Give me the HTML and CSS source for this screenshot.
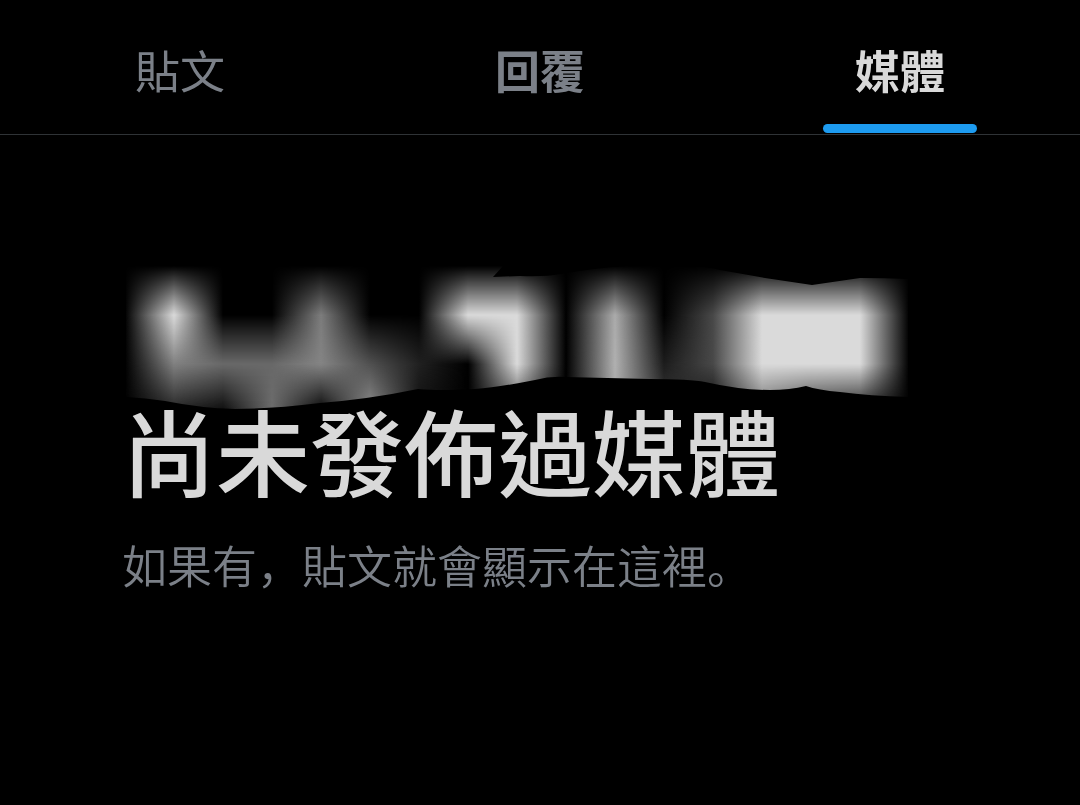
FILE: index.html
```html
<!DOCTYPE html>
<html lang="zh-Hant">
<head>
<meta charset="utf-8">
<meta name="viewport" content="width=device-width, initial-scale=1">
<title>媒體</title>
<link rel="stylesheet" href="styles.css">
</head>
<body>
<nav class="tabs">
  <a class="tab" href="#posts">貼文</a>
  <a class="tab tab-strong" href="#replies">回覆</a>
  <a class="tab tab-strong tab-active" href="#media" aria-current="page">媒體</a>
</nav>
<main class="empty">
  <svg class="redacted" viewBox="122 266 788 143" aria-hidden="true">
    <defs>
      <clipPath id="outline">
        <path d="M126 266H503L493 277L520 276Q545 277 560 274Q595 268 625 266H690Q705 266 720 270L765 278L812 285L860 278Q885 278 908 279V397Q870 396 840 392Q818 390 806 386Q790 390 770 390Q740 390 705 382Q690 379 650 379L565 377Q550 376 535 380Q500 387 475 389Q440 391 418 389Q370 399 320 403Q270 409 235 409Q200 408 165 401Q145 398 126 397Z"/>
      </clipPath>
      <linearGradient id="fade" x1="0" y1="0" x2="0" y2="1">
        <stop offset="0" stop-color="#fff" stop-opacity="0"/>
        <stop offset=".5" stop-color="#fff"/>
        <stop offset="1" stop-color="#fff" stop-opacity="0"/>
      </linearGradient>
      <mask id="m1" maskUnits="userSpaceOnUse" x="125" y="266" width="784" height="98" style="mask-type:alpha"><rect x="125" y="266" width="784" height="98" fill="url(#fade)"/></mask>
      <mask id="m2" maskUnits="userSpaceOnUse" x="125" y="315" width="784" height="98" style="mask-type:alpha"><rect x="125" y="315" width="784" height="98" fill="url(#fade)"/></mask>
      <mask id="m3" maskUnits="userSpaceOnUse" x="125" y="364" width="784" height="98" style="mask-type:alpha"><rect x="125" y="364" width="784" height="98" fill="url(#fade)"/></mask>
      <linearGradient id="r1">
        <stop offset="0" stop-color="#000"/><stop offset=".0625" stop-color="#dadada"/><stop offset=".125" stop-color="#000"/><stop offset=".1875" stop-color="#000"/>
        <stop offset=".25" stop-color="#7c7c7c"/><stop offset=".3125" stop-color="#000"/><stop offset=".375" stop-color="#000"/><stop offset=".4375" stop-color="#dadada"/>
        <stop offset=".5" stop-color="#dadada"/><stop offset=".5625" stop-color="#000"/><stop offset=".625" stop-color="#ababab"/><stop offset=".6875" stop-color="#000"/>
        <stop offset=".75" stop-color="#484848"/><stop offset=".8125" stop-color="#dadada"/><stop offset=".9375" stop-color="#dadada"/><stop offset="1" stop-color="#000"/>
      </linearGradient>
      <linearGradient id="r2">
        <stop offset="0" stop-color="#000"/><stop offset=".0625" stop-color="#808080"/><stop offset=".125" stop-color="#686868"/><stop offset=".1875" stop-color="#686868"/>
        <stop offset=".25" stop-color="#848484"/><stop offset=".3125" stop-color="#505050"/><stop offset=".375" stop-color="#202020"/><stop offset=".4375" stop-color="#000"/>
        <stop offset=".5" stop-color="#dadada"/><stop offset=".5625" stop-color="#000"/><stop offset=".625" stop-color="#b0b0b0"/><stop offset=".6875" stop-color="#1c1c1c"/>
        <stop offset=".75" stop-color="#484848"/><stop offset=".8125" stop-color="#dadada"/><stop offset=".9375" stop-color="#dadada"/><stop offset="1" stop-color="#000"/>
      </linearGradient>
      <linearGradient id="r3">
        <stop offset="0" stop-color="#000"/><stop offset=".0625" stop-color="#202020"/><stop offset=".125" stop-color="#080808"/><stop offset=".1875" stop-color="#6c6c6c"/>
        <stop offset=".25" stop-color="#000"/><stop offset=".3125" stop-color="#909090"/><stop offset=".375" stop-color="#101010"/><stop offset=".4375" stop-color="#000"/>
        <stop offset=".5" stop-color="#404040"/><stop offset=".5625" stop-color="#000"/><stop offset=".625" stop-color="#a8a8a8"/><stop offset=".6875" stop-color="#404040"/>
        <stop offset=".75" stop-color="#080808"/><stop offset=".8125" stop-color="#6c6c6c"/><stop offset=".875" stop-color="#303030"/><stop offset=".9375" stop-color="#181818"/><stop offset="1" stop-color="#000"/>
      </linearGradient>
    </defs>
    <g clip-path="url(#outline)">
      <g class="band" mask="url(#m1)"><rect x="125" y="266" width="784" height="98" fill="url(#r1)"/></g>
      <g class="band" mask="url(#m2)"><rect x="125" y="315" width="784" height="98" fill="url(#r2)"/></g>
      <g class="band" mask="url(#m3)"><rect x="125" y="364" width="784" height="98" fill="url(#r3)"/></g>
    </g>
  </svg>
  <h1 class="title">尚未發佈過媒體</h1>
  <p class="note" lang="zh-Hans">如果有，貼文就會顯示在這裡。</p>
</main>
</body>
</html>
```
FILE: styles.css
```css
* {
  box-sizing: border-box;
}

body {
  margin: 0;
  background: #000;
  color: #d9d9d9;
  font-family: "Noto Sans CJK SC", "Noto Sans CJK TC", sans-serif;
}

.tabs {
  display: grid;
  grid-template-columns: repeat(3, 1fr);
  border-bottom: 1px solid #2f3336;
}

.tab {
  display: flex;
  flex-direction: column;
  align-items: center;
  padding: 38px 0 1px;
  color: #7b8088;
  font-size: 45px;
  line-height: 64px;
  text-decoration: none;
}

.tab::after {
  content: "";
  width: 154px;
  height: 9px;
  margin-top: 22px;
  border-radius: 5px;
}

.tab-strong {
  font-weight: 700;
}

.tab-active {
  color: #d9d9d9;
}

.tab-active::after {
  background: #1d9bf0;
}

.empty {
  padding: 131px 122px 0;
}

.redacted {
  display: block;
  width: 100%;
  max-width: 788px;
}

.band {
  mix-blend-mode: plus-lighter;
}

.title {
  margin: 0;
  font-size: 94px;
  font-weight: 500;
  line-height: 80px;
}

.note {
  margin: 44px 0 0;
  color: #7b8088;
  font-size: 45px;
  font-weight: 350;
  line-height: 64px;
}
```
